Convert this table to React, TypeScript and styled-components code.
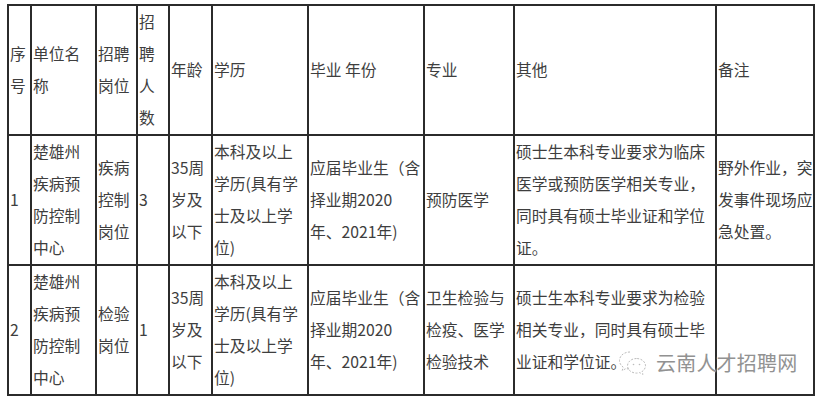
import React from 'react'
import styled, { createGlobalStyle } from 'styled-components'

const GlobalStyle = createGlobalStyle`
  html, body {
    margin: 0;
    padding: 0;
    background: #fff;
  }
  body {
    font-family: "Noto Sans CJK SC", "Noto Sans", sans-serif;
    color: #3e3e3e;
  }
`

const Page = styled.div`
  position: relative;
  width: 820px;
  height: 400px;
  padding: 4px 0 0 7px;
  box-sizing: border-box;
  overflow: hidden;
`

const Table = styled.table`
  border-collapse: collapse;
  table-layout: fixed;
  width: 806px;
  font-size: 15.75px;
  line-height: 32px;
  color: #3e3e3e;
`

const Cell = styled.td`
  border: 2px solid #2b2b2b;
  padding: 0 0 0 1px;
  vertical-align: middle;
  text-align: left;
  word-break: normal;
  height: 127px;
`

const Watermark = styled.div`
  position: absolute;
  left: 617px;
  top: 349px;
  display: flex;
  align-items: center;
  gap: 7px;
  pointer-events: none;
`

const WatermarkText = styled.span`
  font-family: "Noto Sans CJK SC", sans-serif;
  font-size: 20px;
  line-height: 28px;
  letter-spacing: 0.2px;
  color: #929292;
  text-shadow: 0 0 2px #fff, 0 0 2px #fff;
`

const columns = [23, 65, 41, 32, 43, 96, 116, 90, 202, 98]

const header = ['序号', '单位名称', '招聘岗位', '招聘人数', '年龄', '学历', '毕业 年份', '专业', '其他', '备注']

const rows = [
  [
    '1',
    '楚雄州疾病预防控制中心',
    '疾病控制岗位',
    '3',
    '35周岁及以下',
    '本科及以上学历(具有学士及以上学位)',
    '应届毕业生（含择业期2020年、2021年)',
    '预防医学',
    '硕士生本科专业要求为临床医学或预防医学相关专业，同时具有硕士毕业证和学位证。',
    '野外作业，突发事件现场应急处置。',
  ],
  [
    '2',
    '楚雄州疾病预防控制中心',
    '检验岗位',
    '1',
    '35周岁及以下',
    '本科及以上学历(具有学士及以上学位)',
    '应届毕业生（含择业期2020年、2021年)',
    '卫生检验与检疫、医学检验技术',
    '硕士生本科专业要求为检验相关专业，同时具有硕士毕业证和学位证。',
    '',
  ],
]

const WechatMark: React.FC = () => (
  <svg width="32" height="28" viewBox="0 0 32 28" fill="none" stroke="#bcbcbc" strokeWidth="1" strokeDasharray="2 1.5">
    <path d="M13 3C7 3 2.5 6.8 2.5 11.5c0 2.7 1.4 5 3.7 6.6L5.2 21.5l3.9-2c1.2.4 2.5.6 3.9.6" />
    <path d="M19.5 9.5c-5 0-9 3.3-9 7.3s4 7.3 9 7.3c1.1 0 2.2-.2 3.2-.5l3.3 1.8-.9-2.9c2-1.3 3.4-3.4 3.4-5.7 0-4-4-7.3-9-7.3z" />
    <circle cx="16.5" cy="15.5" r="0.8" fill="#bcbcbc" stroke="none" />
    <circle cx="22.5" cy="15.5" r="0.8" fill="#bcbcbc" stroke="none" />
  </svg>
)

export default function App() {
  return (
    <>
      <GlobalStyle />
      <Page>
        <Table>
          <colgroup>
            {columns.map((w, i) => (
              <col key={i} style={{ width: w }} />
            ))}
          </colgroup>
          <tbody>
            <tr>
              {header.map((h, i) => (
                <Cell key={i}>{h}</Cell>
              ))}
            </tr>
            {rows.map((r, ri) => (
              <tr key={ri}>
                {r.map((c, ci) => (
                  <Cell key={ci}>{c}</Cell>
                ))}
              </tr>
            ))}
          </tbody>
        </Table>
        <Watermark>
          <WechatMark />
          <WatermarkText>云南人才招聘网</WatermarkText>
        </Watermark>
      </Page>
    </>
  )
}
